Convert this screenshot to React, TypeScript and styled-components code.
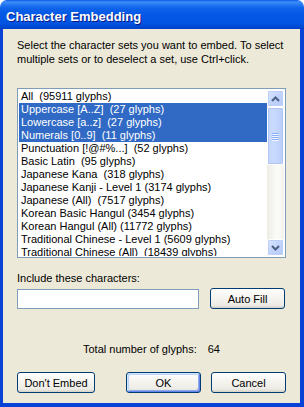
import styled, { createGlobalStyle } from "styled-components";

const GlobalStyle = createGlobalStyle`
  html, body {
    margin: 0;
    padding: 0;
    background: #ffffff;
  }
  body {
    font-family: Tahoma, "Liberation Sans", Arial, sans-serif;
    font-size: 11px;
    color: #000000;
  }
`;

const Window = styled.div`
  width: 304px;
  height: 407px;
  display: flex;
  flex-direction: column;
`;

const TitleBar = styled.div`
  flex: none;
  height: 29px;
  box-sizing: border-box;
  padding: 4px 6px 0;
  display: flex;
  align-items: center;
  border-radius: 7px 7px 0 0;
  background: linear-gradient(
    to bottom,
    #0a5ae6 0%,
    #3d8ff7 7%,
    #2a7cf3 14%,
    #0e63ea 28%,
    #0458e6 50%,
    #0254e2 78%,
    #004bd8 90%,
    #003fc4 100%
  );
  color: #ffffff;
  font: bold 13px "Liberation Sans", Arial, sans-serif;
  text-shadow: 1px 1px 0 #0a1883;
`;

const Body = styled.div`
  flex: 1;
  display: flex;
  flex-direction: column;
  padding: 9px 14px 10px;
  background: #ece9d8;
  border-left: 3px solid #0843d6;
  border-right: 4px solid #0843d6;
  border-bottom: 4px solid #0843d6;
`;

const Description = styled.p`
  margin: 0;
  line-height: 14px;
`;

const ListBox = styled.div`
  margin-top: 22px;
  height: 170px;
  box-sizing: border-box;
  display: flex;
  border: 1px solid #7f9db9;
  padding: 1px;
  background: #ffffff;
`;

const Items = styled.div`
  flex: 1;
  overflow: hidden;
`;

const Row = styled.div<{ $selected?: boolean }>`
  height: 13px;
  line-height: 13px;
  padding-left: 2px;
  white-space: pre;
  background: ${(p) => (p.$selected ? "#316ac5" : "transparent")};
  color: ${(p) => (p.$selected ? "#ffffff" : "#000000")};
`;

const ScrollBar = styled.div`
  flex: none;
  width: 17px;
  display: flex;
  flex-direction: column;
  background: linear-gradient(to right, #eeede5, #fbfbf8 60%, #f4f3ee);
`;

const ScrollButton = styled.div`
  flex: none;
  height: 17px;
  box-sizing: border-box;
  display: flex;
  align-items: center;
  justify-content: center;
  border: 1px solid #ffffff;
  border-radius: 2px;
  background: linear-gradient(135deg, #dbe6fe 0%, #c2d4fb 50%, #b2c9f8 100%);
  box-shadow: inset 0 0 0 1px #bccff8;
`;

const Thumb = styled.div`
  flex: none;
  height: 58px;
  box-sizing: border-box;
  display: flex;
  align-items: center;
  justify-content: center;
  border: 1px solid #ffffff;
  border-radius: 2px;
  background: linear-gradient(to right, #c6d6fc 0%, #cadafd 40%, #b9cdf9 100%);
  box-shadow: inset 0 0 0 1px #b0c6f4;
`;

const Track = styled.div`
  flex: 1;
`;

const Grip = styled.div`
  width: 7px;
  display: flex;
  flex-direction: column;
  gap: 1px;

  span {
    height: 1px;
    background: #8cb0f8;
    box-shadow: 0 1px 0 #eef4fe;
  }
`;

const FieldLabel = styled.div`
  margin-top: 13px;
  line-height: 14px;
`;

const FieldRow = styled.div`
  margin-top: 3px;
  display: flex;
  align-items: center;
  gap: 11px;
`;

const TextInput = styled.input`
  width: 182px;
  height: 20px;
  box-sizing: border-box;
  margin: 0;
  border: 1px solid #7f9db9;
  background: #ffffff;
  outline: none;
`;

const Button = styled.button<{ $default?: boolean; $width?: number }>`
  width: ${(p) => p.$width ?? 75}px;
  height: 21px;
  box-sizing: border-box;
  margin: 0;
  padding: 0;
  border: 1px solid #003c74;
  border-radius: 3px;
  background: linear-gradient(to bottom, #ffffff 0%, #f4f3ee 50%, #ecebe6 85%, #d6d0c5 100%);
  font-family: Tahoma, "Liberation Sans", Arial, sans-serif;
  font-size: 11px;
  color: #000000;
  box-shadow: ${(p) =>
    p.$default
      ? "inset 1px 1px 0 #cee7ff, inset -1px -1px 0 #6982ee, inset 2px 2px 0 #bcd4f6, inset -2px -2px 0 #89ade4"
      : "none"};
`;

const Total = styled.div`
  margin-top: 33px;
  line-height: 14px;
  display: flex;
  justify-content: center;
  gap: 11px;
`;

const Actions = styled.div`
  margin-top: 16px;
  display: flex;
  gap: 10px;

  & > :nth-child(2) {
    margin-left: auto;
  }
`;

function Arrow({ up }: { up?: boolean }) {
  return (
    <svg width="9" height="6" viewBox="0 0 9 6">
      <polyline
        points={up ? "1,5 4.5,1.5 8,5" : "1,1 4.5,4.5 8,1"}
        fill="none"
        stroke="#4d6185"
        strokeWidth="2"
      />
    </svg>
  );
}

const characterSets = [
  { label: "All  (95911 glyphs)" },
  { label: "Uppercase [A..Z]  (27 glyphs)", selected: true },
  { label: "Lowercase [a..z]  (27 glyphs)", selected: true },
  { label: "Numerals [0..9]  (11 glyphs)", selected: true },
  { label: "Punctuation [!@#%...]  (52 glyphs)" },
  { label: "Basic Latin  (95 glyphs)" },
  { label: "Japanese Kana  (318 glyphs)" },
  { label: "Japanese Kanji - Level 1 (3174 glyphs)" },
  { label: "Japanese (All)  (7517 glyphs)" },
  { label: "Korean Basic Hangul (3454 glyphs)" },
  { label: "Korean Hangul (All) (11772 glyphs)" },
  { label: "Traditional Chinese - Level 1 (5609 glyphs)" },
  { label: "Traditional Chinese (All)  (18439 glyphs)" },
];

function App() {
  return (
    <>
      <GlobalStyle />
      <Window>
        <TitleBar>Character Embedding</TitleBar>
        <Body>
          <Description>
            Select the character sets you want to embed. To select multiple
            sets or to deselect a set, use Ctrl+click.
          </Description>
          <ListBox>
            <Items>
              {characterSets.map((set) => (
                <Row key={set.label} $selected={set.selected}>
                  {set.label}
                </Row>
              ))}
            </Items>
            <ScrollBar>
              <ScrollButton>
                <Arrow up />
              </ScrollButton>
              <Thumb>
                <Grip>
                  <span />
                  <span />
                  <span />
                  <span />
                </Grip>
              </Thumb>
              <Track />
              <ScrollButton>
                <Arrow />
              </ScrollButton>
            </ScrollBar>
          </ListBox>
          <FieldLabel>Include these characters:</FieldLabel>
          <FieldRow>
            <TextInput type="text" />
            <Button>Auto Fill</Button>
          </FieldRow>
          <Total>
            <span>Total number of glyphs:</span>
            <span>64</span>
          </Total>
          <Actions>
            <Button $width={78}>Don't Embed</Button>
            <Button $default>OK</Button>
            <Button>Cancel</Button>
          </Actions>
        </Body>
      </Window>
    </>
  );
}

export default App;
